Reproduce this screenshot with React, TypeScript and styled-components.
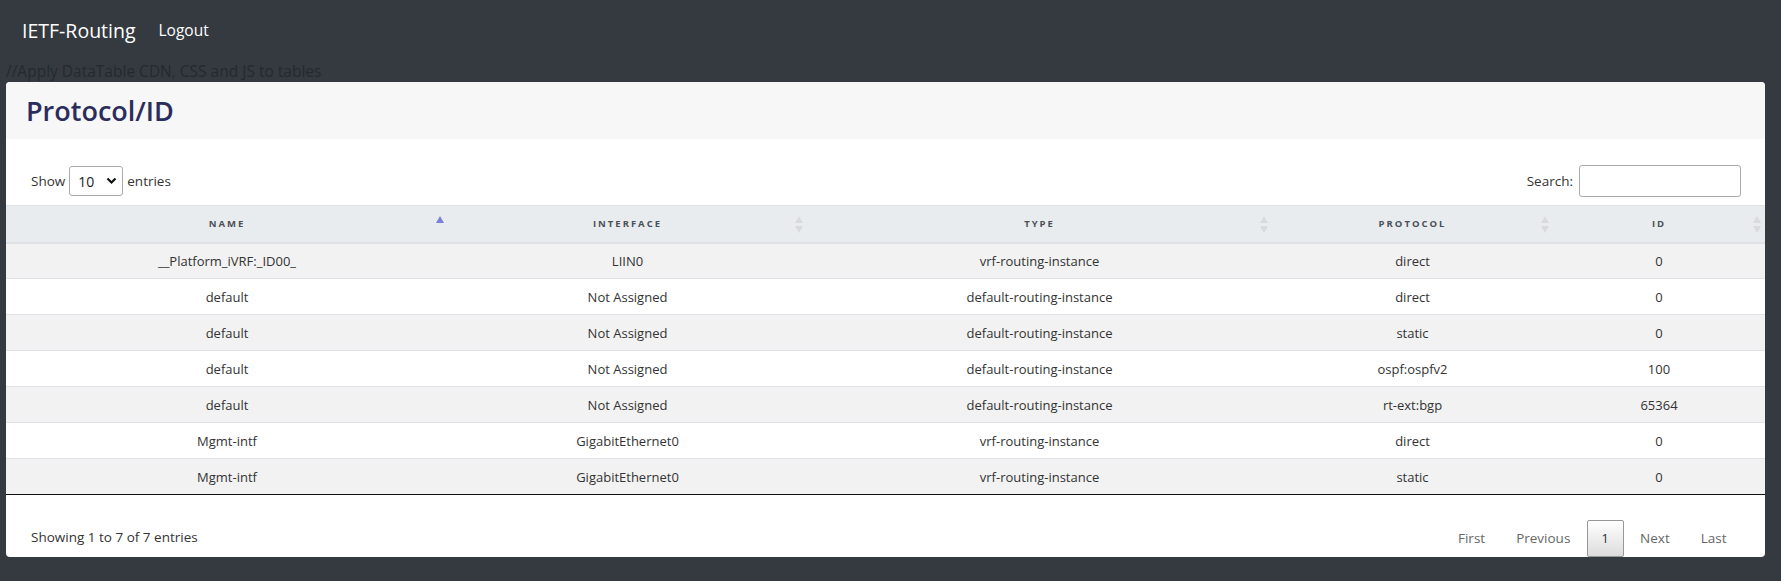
import { FC } from "react";
import styled, { createGlobalStyle } from "styled-components";

const GlobalStyle = createGlobalStyle`
    body {
        margin: 0;
        background-color: #343a40;
        font-family: "Open Sans", "Noto Sans", sans-serif;
    }
`

const NavBar = styled.nav`
    display: flex;
    align-items: center;
    height: 60px;
    padding: 0 22px;
    box-sizing: border-box;
`
const Brand = styled.span`
    font-size: 19.5px;
    color: #ffffff;
    margin-right: 23px;
`
const NavLink = styled.span`
    font-size: 15.5px;
    color: #ffffff;
`
const Comment = styled.div`
    height: 22px;
    line-height: 22px;
    padding-left: 6px;
    font-size: 15.5px;
    color: #25292e;
`
const Card = styled.section`
    margin: 0 16px 0 6px;
    background-color: #ffffff;
    border-radius: 4px;
    overflow: hidden;
`
const CardHeader = styled.div`
    height: 57px;
    display: flex;
    align-items: center;
    padding: 0 20px;
    background-color: #f7f7f7;
    h3 {
        margin: 0;
        font-size: 27px;
        font-weight: 600;
        color: #2b2d5c;
    }
`
const Controls = styled.div`
    display: flex;
    justify-content: space-between;
    align-items: center;
    padding: 26px 24px 8px 25px;
    font-size: 13.5px;
    color: #333;
`
const ControlLabel = styled.label`
    display: flex;
    align-items: center;
    gap: 4px;
`
const SelectWrap = styled.span`
    position: relative;
    display: inline-flex;
    select {
        appearance: none;
        width: 54px;
        height: 30px;
        padding: 0 0 0 8px;
        border: 1px solid #aaa;
        border-radius: 3px;
        background: #fff;
        font-family: inherit;
        font-size: 14px;
        color: #222;
    }
    svg {
        position: absolute;
        right: 6px;
        top: 11px;
        pointer-events: none;
    }
`
const SearchInput = styled.input`
    width: 162px;
    height: 32px;
    box-sizing: border-box;
    border: 1px solid #aaa;
    border-radius: 3px;
    margin-left: 2px;
`
const Table = styled.table`
    width: 100%;
    table-layout: fixed;
    border-collapse: collapse;
    border-bottom: 1px solid #111;
    font-size: 13px;
    color: #333;
`
const Th = styled.th`
    position: relative;
    height: 37px;
    padding: 0;
    background-color: #e9ecef;
    border-top: 1px solid #dee2e6;
    border-bottom: 2px solid #dee2e6;
    font-size: 9.5px;
    font-weight: 700;
    letter-spacing: 2px;
    text-transform: uppercase;
    color: #495057;
    text-align: center;
    box-sizing: border-box;
`
const SortIcon = styled.span<{ $active?: boolean }>`
    position: absolute;
    right: 4px;
    top: 10px;
    display: flex;
    flex-direction: column;
    gap: 3px;
    i {
        width: 0;
        height: 0;
        border-left: 4px solid transparent;
        border-right: 4px solid transparent;
    }
    .up {
        border-bottom: 7px solid ${(p) => (p.$active ? "#7b80d8" : "#d8dadc")};
    }
    .down {
        border-top: 7px solid #d8dadc;
        visibility: ${(p) => (p.$active ? "hidden" : "visible")};
    }
`
const Tr = styled.tr<{ $odd: boolean }>`
    background-color: ${(p) => (p.$odd ? "#f2f2f2" : "#ffffff")};
    td {
        height: 36px;
        padding: 0;
        border-top: 1px solid #dee2e6;
        text-align: center;
        box-sizing: border-box;
    }
`
const Footer = styled.div`
    display: flex;
    justify-content: space-between;
    align-items: center;
    padding: 25px 24px 0 25px;
    font-size: 13.5px;
    color: #333;
`
const FooterInfo = styled.span`
    margin-top: -3px;
`
const Pager = styled.div`
    display: flex;
    align-items: center;
    font-size: 13.5px;
`
const PageButton = styled.span<{ $current?: boolean }>`
    padding: 0 13.5px;
    margin-left: 2px;
    height: 37px;
    line-height: 35px;
    box-sizing: border-box;
    border: 1px solid ${(p) => (p.$current ? "#979797" : "transparent")};
    border-radius: 2px;
    color: ${(p) => (p.$current ? "#333" : "#666")};
    background: ${(p) => (p.$current ? "linear-gradient(to bottom, #fff 0%, #dcdcdc 100%)" : "none")};
`

const columns = [
    { title: "Name", width: 442, active: true },
    { title: "Interface", width: 359 },
    { title: "Type", width: 465 },
    { title: "Protocol", width: 281 },
    { title: "ID", width: 212 },
]

const rows = [
    ["__Platform_iVRF:_ID00_", "LIIN0", "vrf-routing-instance", "direct", "0"],
    ["default", "Not Assigned", "default-routing-instance", "direct", "0"],
    ["default", "Not Assigned", "default-routing-instance", "static", "0"],
    ["default", "Not Assigned", "default-routing-instance", "ospf:ospfv2", "100"],
    ["default", "Not Assigned", "default-routing-instance", "rt-ext:bgp", "65364"],
    ["Mgmt-intf", "GigabitEthernet0", "vrf-routing-instance", "direct", "0"],
    ["Mgmt-intf", "GigabitEthernet0", "vrf-routing-instance", "static", "0"],
]

const App: FC = () => {
    return (
        <>
            <GlobalStyle />
            <NavBar>
                <Brand>IETF-Routing</Brand>
                <NavLink>Logout</NavLink>
            </NavBar>
            <Comment>//Apply DataTable CDN, CSS and JS to tables</Comment>
            <Card>
                <CardHeader>
                    <h3>Protocol/ID</h3>
                </CardHeader>
                <Controls>
                    <ControlLabel>
                        Show
                        <SelectWrap>
                            <select defaultValue="10">
                                <option>10</option>
                                <option>25</option>
                                <option>50</option>
                                <option>100</option>
                            </select>
                            <svg width="11" height="8" viewBox="0 0 11 8">
                                <path d="M1.5 1.5 L5.5 5.5 L9.5 1.5" stroke="#111" strokeWidth="2.2" fill="none" />
                            </svg>
                        </SelectWrap>
                        entries
                    </ControlLabel>
                    <ControlLabel>
                        Search:
                        <SearchInput type="search" />
                    </ControlLabel>
                </Controls>
                <Table>
                    <colgroup>
                        {columns.map((c) => (
                            <col key={c.title} style={{ width: c.width }} />
                        ))}
                    </colgroup>
                    <thead>
                        <tr>
                            {columns.map((c) => (
                                <Th key={c.title}>
                                    {c.title}
                                    <SortIcon $active={c.active}>
                                        <i className="up" />
                                        <i className="down" />
                                    </SortIcon>
                                </Th>
                            ))}
                        </tr>
                    </thead>
                    <tbody>
                        {rows.map((r, i) => (
                            <Tr key={i} $odd={i % 2 === 0}>
                                {r.map((cell, j) => (
                                    <td key={j}>{cell}</td>
                                ))}
                            </Tr>
                        ))}
                    </tbody>
                </Table>
                <Footer>
                    <FooterInfo>Showing 1 to 7 of 7 entries</FooterInfo>
                    <Pager>
                        <PageButton>First</PageButton>
                        <PageButton>Previous</PageButton>
                        <PageButton $current>1</PageButton>
                        <PageButton>Next</PageButton>
                        <PageButton>Last</PageButton>
                    </Pager>
                </Footer>
            </Card>
        </>
    )
}

export default App;
